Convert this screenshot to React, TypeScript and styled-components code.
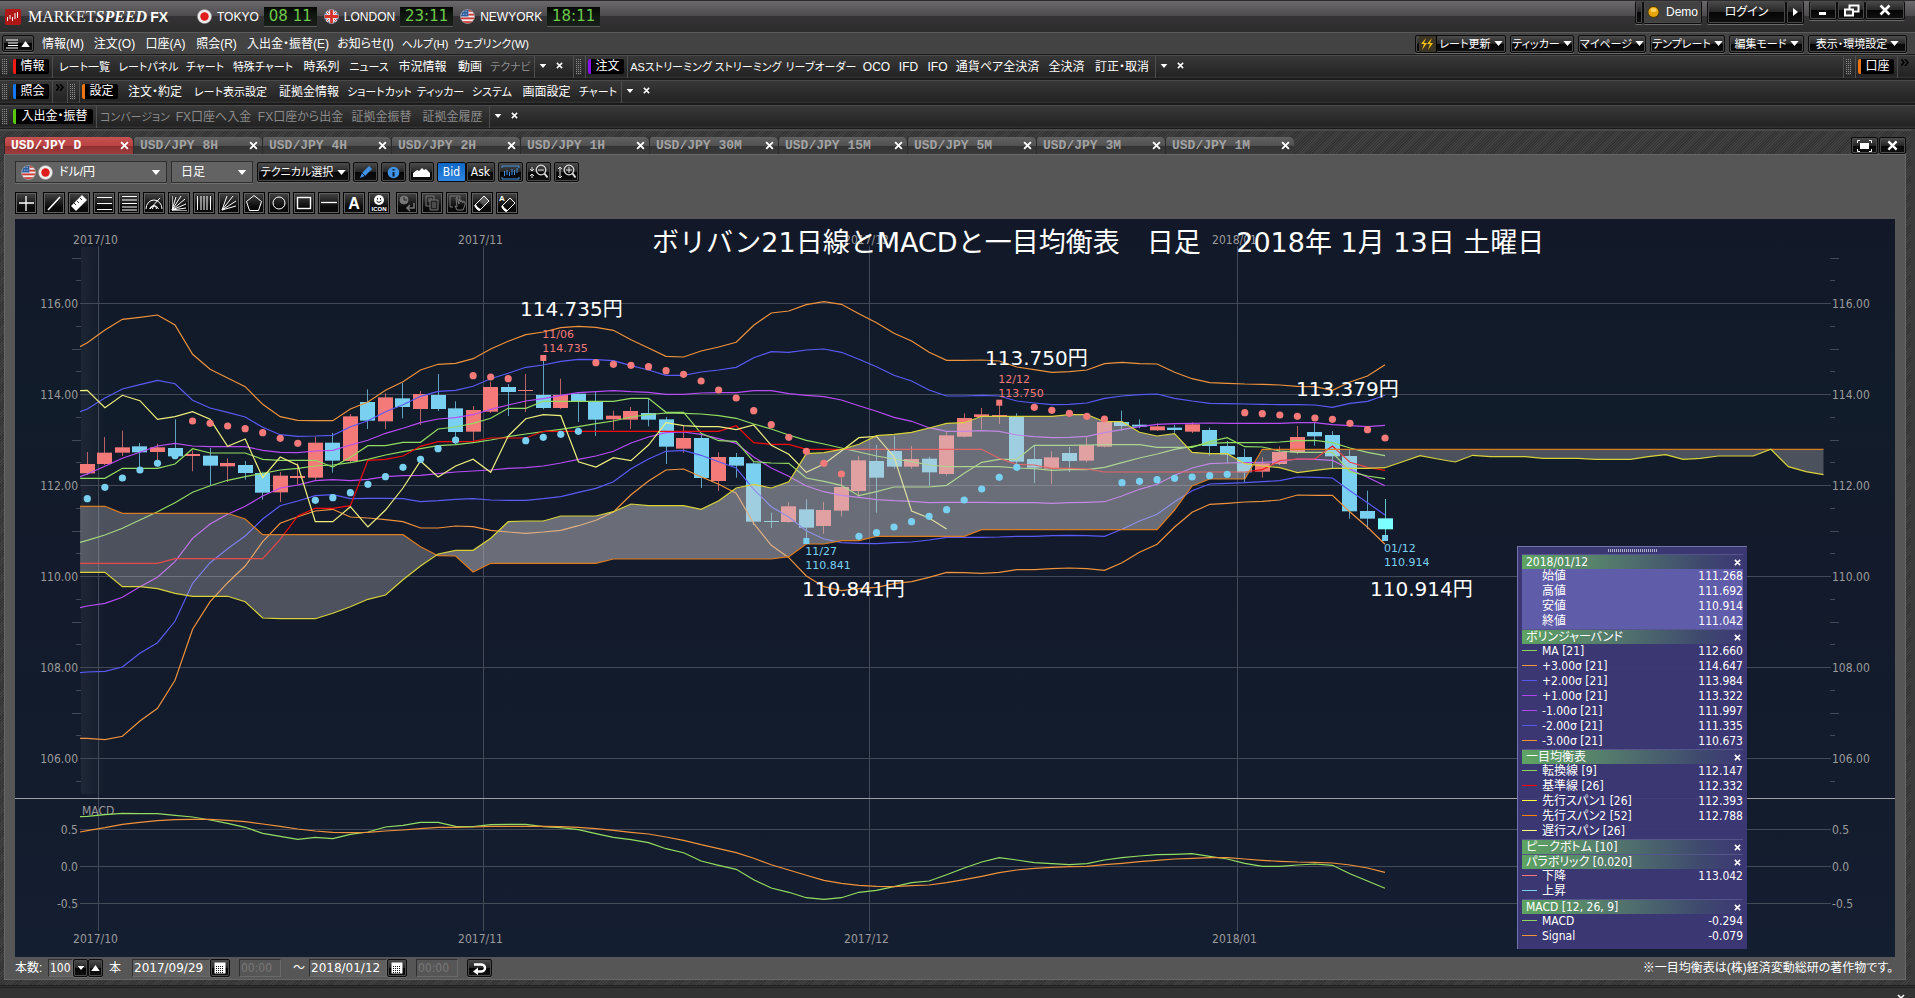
import React from 'react';
import styled, { createGlobalStyle, css } from 'styled-components';

const uiFont = '"Liberation Sans", "Noto Sans CJK JP", sans-serif';
const chartFont = '"DejaVu Sans Condensed", "Noto Sans CJK JP", sans-serif';
const wideFont = '"DejaVu Sans", "Noto Sans CJK JP", sans-serif';

const GlobalStyle = createGlobalStyle`
  * { box-sizing: border-box; }
  body {
    margin: 0;
    background: #333;
    color: #fff;
    font: 12px/16px ${uiFont};
    font-feature-settings: "palt";
  }
  button, input, select { font: inherit; font-feature-settings: inherit; color: inherit; margin: 0; }
`;

const hatch = css`
  background: repeating-linear-gradient(135deg, #414141 0 1px, #333 1px 2px);
`;
const blackButton = css`
  border: 1px solid #0c0c0c;
  border-radius: 2px;
  background: linear-gradient(#4c4c4c, #262626 50%, #050505 50%, #101010);
  box-shadow: inset 0 0 0 1px #4a4a4a, 0 1px 0 #6b6b6b;
`;

const Shell = styled.div`
  display: flex;
  flex-direction: column;
  min-height: 100vh;
  overflow: hidden;
`;

/* ---------- title bar ---------- */
const TitleBar = styled.header`
  display: flex;
  align-items: flex-start;
  justify-content: space-between;
  height: 32px;
  border-top: 1px solid #2c2a2c;
  background: linear-gradient(#6b696b, #4c4a4c 15px, #353335 15px, #2c2c2c);
`;
const Brand = styled.div`
  display: flex;
  align-items: center;
  height: 31px;
  padding-left: 5px;
`;
const BrandName = styled.h1`
  margin: 0 0 0 7px;
  width: 169px;
  font: 16px/20px "Liberation Serif", serif;
  white-space: nowrap;
  em { font-weight: bold; }
  strong { font: bold 14px/20px ${uiFont}; margin-left: 3px; }
`;
const City = styled.div`
  display: flex;
  align-items: center;
  gap: 5px;
  margin-right: 7px;
  font-size: 12px;
  white-space: nowrap;
`;
const Clock = styled.time`
  width: 53px;
  height: 20px;
  background: linear-gradient(#060806, #101810 50%, #1a1e1a);
  border-bottom: 1px solid #5a5a5a;
  color: #6fc94c;
  font: 15px/19px ${wideFont};
  text-align: center;
  white-space: pre;
`;
const WindowArea = styled.div`
  display: flex;
  padding-right: 10px;
`;
const TopButtons = styled.div<{ $gap: number; $h: number }>`
  display: flex;
  margin-left: ${p => p.$gap}px;
  height: ${p => p.$h}px;
`;
const TopButton = styled.button<{ $w: number; $lit?: boolean }>`
  ${blackButton}
  ${p => p.$lit && css`background: #414141;`}
  border-top: 0;
  display: flex;
  align-items: center;
  justify-content: center;
  gap: 6px;
  width: ${p => p.$w}px;
  padding: 0;
  white-space: nowrap;
`;

/* ---------- menu ---------- */
const MenuBar = styled.nav`
  display: flex;
  align-items: center;
  justify-content: space-between;
  height: 22px;
  padding: 0 8px 0 2px;
  border-top: 1px solid #5b5b5b;
  background: #434343;
`;
const MenuGroup = styled.div`
  display: flex;
  align-items: center;
`;
const MenuButton = styled.button`
  ${blackButton}
  display: flex;
  align-items: center;
  justify-content: center;
  gap: 3px;
  width: 32px;
  height: 17px;
  margin-right: 3px;
  padding: 0;
`;
const Slot = styled.a<{ $w: number; $dim?: boolean; $small?: boolean }>`
  flex: none;
  display: flex;
  justify-content: center;
  width: ${p => p.$w}px;
  font-size: ${p => (p.$small ? 11 : 12)}px;
  color: ${p => (p.$dim ? '#8c8c8c' : '#fff')};
  text-decoration: none;
  white-space: nowrap;
`;
const DropButton = styled.button<{ $w: number }>`
  ${blackButton}
  display: flex;
  align-items: center;
  justify-content: center;
  gap: 3px;
  width: ${p => p.$w}px;
  height: 18px;
  margin-left: 4px;
  padding: 0;
  font-size: 11px;
  white-space: nowrap;
`;
const Bolt = styled.span`
  display: flex;
  align-items: center;
  justify-content: center;
  width: 18px;
  height: 16px;
  border-right: 1px solid #000;
  background: #3c3424;
`;

/* ---------- tool bars ---------- */
const ToolRow = styled.div`
  display: flex;
  align-items: center;
  height: 25px;
  padding-right: 3px;
  border-top: 1px solid #1b1b1b;
  border-bottom: 1px solid #1b1b1b;
  background: linear-gradient(#4a4a4a 1px, #383838 1px, #232323 21px, #303030 22px);
`;
const ToolGroup = styled.div<{ $end?: boolean }>`
  display: flex;
  align-items: center;
  height: 100%;
  ${p => p.$end && css`margin-left: auto;`}
`;
const Grip = styled.i`
  width: 6px;
  height: 16px;
  margin: 0 3px 0 2px;
  background:
    repeating-linear-gradient(0deg, #333 0 1px, transparent 1px 2px),
    repeating-linear-gradient(90deg, #8a8a8a 0 1px, #333 1px 2px);
`;
const Tag = styled.span<{ $c: string; $w: number }>`
  flex: none;
  width: ${p => p.$w}px;
  height: 15px;
  margin: 0 3px 0 2px;
  border-left: 3px solid ${p => p.$c};
  border-radius: 2px;
  background: #000;
  line-height: 15px;
  text-align: center;
`;
const Divider = styled.i`
  width: 1px;
  height: 22px;
  background: #4e4e4e;
`;
const ToolItems = styled.div`
  display: flex;
  padding: 0 1px;
`;
const TinyButton = styled.button<{ $dark?: boolean }>`
  display: flex;
  align-items: center;
  justify-content: center;
  width: ${p => (p.$dark ? 14 : 16)}px;
  height: 20px;
  padding: 0;
  border: 0;
  background: none;
  color: ${p => (p.$dark ? '#000' : '#fff')};
  ${p => p.$dark && css`padding-bottom: 8px;`}
`;
const GroupTail = styled.div`
  display: flex;
  margin-right: 6px;
`;

/* ---------- tabs ---------- */
const Workspace = styled.main`
  ${hatch}
  border-top: 2px solid #4a4a4a;
  padding: 0 5px 5px 4px;
  border-right: 4px solid #3b3b3b;
`;
const TabStrip = styled.div`
  display: flex;
  align-items: flex-end;
  height: 23px;
`;
const Tab = styled.div<{ $active?: boolean }>`
  display: flex;
  align-items: center;
  justify-content: space-between;
  width: 129px;
  height: 17px;
  padding: 0 1px 0 6px;
  border-left: 1px solid #2a2a2a;
  border-radius: 3px 5px 0 0;
  background: ${p =>
    p.$active
      ? 'linear-gradient(#c65252, #b94242 9px, #8f2f2f 9px, #9c3c3c)'
      : 'linear-gradient(#616161, #505050 9px, #333 9px, #3a3a3a)'};
`;
const TabLabel = styled.button<{ $active?: boolean }>`
  padding: 0;
  border: 0;
  background: none;
  color: ${p => (p.$active ? '#fff' : '#a2a2a2')};
  font: bold 13px/17px "Liberation Mono", monospace;
`;
const PaneButton = styled.button`
  ${blackButton}
  display: flex;
  align-items: center;
  justify-content: center;
  width: 27px;
  height: 17px;
  margin-left: 1px;
  padding: 0;
`;
const Spacer = styled.div`
  flex: 1;
`;

const Pane = styled.section`
  border: 1px solid #676767;
  padding: 6px 10px 0;
  background: #565656;
`;
const ControlRow = styled.div`
  display: flex;
  align-items: center;
  gap: 3px;
  height: 22px;
`;
const Picker = styled.label<{ $w: number }>`
  display: flex;
  align-items: center;
  gap: 2px;
  width: ${p => p.$w}px;
  height: 22px;
  margin-right: 1px;
  padding: 0 5px;
  border: 1px solid #2f2f2f;
  box-shadow: 0 1px 0 #707070;
  background: #636363;
  select {
    flex: 1;
    min-width: 0;
    padding: 0 4px;
    border: 0;
    outline: 0;
    appearance: none;
    background: none;
  }
`;
const ToolButton = styled.button<{ $w?: number }>`
  ${blackButton}
  display: flex;
  align-items: center;
  justify-content: center;
  gap: 4px;
  width: ${p => p.$w || 25}px;
  height: 20px;
  padding: 0;
  font-size: 11px;
  white-space: nowrap;
`;
const Pair = styled.div`
  display: flex;
`;
const PriceSide = styled.button<{ $on?: boolean }>`
  ${blackButton}
  ${p => p.$on && css`background: linear-gradient(#0f66c4, #2f86e0); box-shadow: none;`}
  width: 29px;
  height: 20px;
  padding: 0;
  font: 12px/16px ${chartFont};
`;
const DrawRow = styled(ControlRow)`
  margin-top: 9px;
`;
const DrawButton = styled.button<{ $gap?: boolean }>`
  width: 22px;
  height: 22px;
  padding: 0;
  margin-right: ${p => (p.$gap ? 3 : 0)}px;
  border: 1px solid #050505;
  outline: 1px solid #5f5f5f;
  outline-offset: -2px;
  background: linear-gradient(#454545, #0a0a0a 70%);
  svg { display: block; }
`;

/* ---------- chart ---------- */
const ChartBox = styled.div`
  position: relative;
  margin-top: 5px;
  background: linear-gradient(#121828, #111c2a 25%, #131a2b 45%, #121c2c 75%, #141e31);
  font-feature-settings: normal;
  > svg { display: block; width: 100%; height: auto; }
`;
const Legend = styled.aside`
  position: absolute;
  right: 148px;
  bottom: 8px;
  width: 230px;
  padding: 3px 4px 5px;
  border-left: 1px solid #7474ad;
  border-top: 1px solid #7474ad;
  background: rgba(61, 57, 118, 0.95);
  font: 12px/15px ${chartFont};
  font-feature-settings: "palt";
`;
const LegendGrip = styled.div`
  width: 50px;
  height: 3px;
  margin: -1px auto 2px;
  background: repeating-linear-gradient(90deg, #b0b0cc 0 1px, transparent 1px 2px);
`;
const LegendHead = styled.div`
  display: flex;
  align-items: center;
  justify-content: space-between;
  height: 15px;
  padding: 0 1px 0 4px;
  border-top: 1px solid #55558c;
  background: linear-gradient(90deg, #5ea462, #567f6c 35%, #3f4a6e 80%, #3c3874);
  line-height: 14px;
  button { height: 12px; width: 8px; padding: 0; border: 0; background: none; display: flex; align-items: center; }
`;
const LegendTable = styled.table<{ $lit?: boolean }>`
  width: 100%;
  border-collapse: collapse;
  background: ${p => (p.$lit ? '#5f5ca9' : 'transparent')};
  tr { height: 15px; }
  th, td { padding: 0; font-weight: normal; line-height: 15px; height: 15px; }
  th { text-align: left; }
  td { text-align: right; }
`;
const Swatch = styled.i<{ $c?: string }>`
  display: inline-block;
  width: 15px;
  height: 1px;
  margin-right: 5px;
  vertical-align: 4px;
  background: ${p => p.$c || 'transparent'};
`;

/* ---------- bottom ---------- */
const BottomRow = styled.div`
  display: flex;
  align-items: center;
  height: 22px;
`;
const Field = styled.input<{ $w: number; $off?: boolean }>`
  width: ${p => p.$w}px;
  height: 18px;
  padding: 0 1px;
  border: 1px solid #333;
  border-color: #303030 #6a6a6a #6a6a6a #303030;
  background: ${p => (p.$off ? '#565656' : '#606060')};
  color: ${p => (p.$off ? '#787878' : '#fff')};
  font: 12px/16px ${p => (p.$w > 60 ? wideFont : chartFont)};
`;
const SmallButton = styled.button<{ $w: number; $gap?: number }>`
  ${blackButton}
  display: flex;
  align-items: center;
  justify-content: center;
  width: ${p => p.$w}px;
  height: 18px;
  padding: 0;
  margin-right: ${p => p.$gap || 0}px;
`;
const Caption = styled.label<{ $w: number }>`
  width: ${p => p.$w}px;
  white-space: nowrap;
`;
const Note = styled.p`
  margin: 0 2px 0 auto;
`;
const Footer = styled.footer`
  display: flex;
  flex: 1;
  justify-content: flex-end;
  padding-right: 6px;
  border-top: 3px double #1f1f1f;
  background: #333;
  overflow: hidden;
  height: 13px;
`;

/* ---------- icons ---------- */
const Down = ({ s = 9 }: { s?: number }) => (
  <svg width={s} height={s > 8 ? 5 : 4} viewBox="0 0 10 6"><path d="M0 0h10L5 6z" fill="#fff" /></svg>
);
const Up = () => <svg width="9" height="6" viewBox="0 0 10 7"><path d="M0 7h10L5 0z" fill="#fff" /></svg>;
const Cross = ({ s = 7 }: { s?: number }) => (
  <svg width={s} height={s} viewBox="0 0 8 8"><path d="M1 1l6 6M7 1l-6 6" stroke="#fff" strokeWidth="1.7" /></svg>
);
const More = () => (
  <svg width="8" height="7" viewBox="0 0 8 7"><path d="M0 0l3 3.500-3 3.500M4 0l3 3.500-3 3.500" fill="none" stroke="currentColor" strokeWidth="1.6" /></svg>
);
const Flag = ({ kind }: { kind: 'jp' | 'uk' | 'us' }) => (
  <svg width="15" height="15" viewBox="0 0 16 16">
    <clipPath id={'c' + kind}><circle cx="8" cy="8" r="7.500" /></clipPath>
    <g clipPath={`url(#c${kind})`}>
      {kind === 'jp' && <><rect width="16" height="16" fill="#eee" /><circle cx="8" cy="8" r="4.500" fill="#e01c1c" /></>}
      {kind === 'us' && <>
        <rect width="16" height="16" fill="#eee" />
        {[1, 5, 9, 13].map(y => <rect key={y} y={y} width="16" height="2" fill="#cf3a35" />)}
        <rect width="9" height="8" fill="#2f5f9e" />
        <path d="M1 2.500h8M1 5.500h8" stroke="#cfe0f2" strokeDasharray="1 1.500" />
      </>}
      {kind === 'uk' && <>
        <rect width="16" height="16" fill="#26579b" />
        <path d="M0 0l16 16M16 0L0 16" stroke="#eee" strokeWidth="3" />
        <path d="M0 0l16 16M16 0L0 16" stroke="#d6302b" />
        <path d="M8 0v16M0 8h16" stroke="#eee" strokeWidth="5" />
        <path d="M8 0v16M0 8h16" stroke="#d6302b" strokeWidth="3" />
      </>}
    </g>
    <circle cx="8" cy="8" r="7.500" fill="none" stroke="#999" strokeWidth=".6" />
  </svg>
);

const fan = 'M4 18L8 5M4 18L13 4M4 18L17 7M4 18L18 12M4 18L18 16';
const drawTools: [string, React.ReactNode, boolean?][] = [
  ['十字', <path d="M11 4v15M4 11h15" strokeWidth="1.300" />, true],
  ['直線', <path d="M5 18L17 5" strokeWidth="1.600" />],
  ['定規', <><path d="M3 14L14 3l5 5L8 19z" fill="#fff" stroke="none" /><path d="M6 11l2 2M9 9l2 2M12 6l2 2" stroke="#333" /></>],
  ['三本線', <path d="M4 5.500h15M4 11.500h15M4 17.500h15" />],
  ['多本線', <path d="M4 4.500h15M4 8h15M4 11.500h15M4 15h15M4 18h15" />],
  ['円弧', <><path d="M3 17a8 9 0 0 1 16 0M6.500 17a5 6 0 0 1 9 0M9.500 17a2 3 0 0 1 4 0M7 17l10-11" /></>],
  ['扇形', <><path d="M4.500 4v14.500H19" strokeOpacity=".6" /><path d={fan} /></>],
  ['時間帯', <path d="M4.500 4v14M8 4v14M11 4v14M14 4v14M17.500 4v14" />],
  ['放射線', <path d="M4 18L9 4M4 18L15 4M4 18L18 9M4 18L18 14" />],
  ['五角形', <path d="M11 3.500l7.500 6-3 9h-9l-3-9z" />],
  ['円', <circle cx="11" cy="11" r="6" />],
  ['四角', <rect x="4.500" y="5.500" width="13" height="11" strokeWidth="1.400" />],
  ['水平線', <path d="M3 10.500h16" strokeWidth="1.300" />],
  ['文字', <text x="11" y="17" textAnchor="middle" fill="#fff" stroke="none" fontWeight="bold" fontSize="16">A</text>],
  ['アイコン', <>
    <circle cx="11" cy="8" r="5" fill="#fff" stroke="none" />
    <path d="M9.500 6v1.500M12.500 6v1.500M8.500 9q2.500 3 5 0" stroke="#111" />
    <text x="11" y="19" textAnchor="middle" fill="#fff" stroke="none" fontWeight="bold" fontSize="6">ICON</text>
  </>, true],
  ['履歴', <g stroke="#777"><circle cx="8" cy="8" r="4" fill="#777" /><path d="M8 5v3h3" stroke="#222" /><path d="M18 11v5h-6M14 13l-3 3 3 3" strokeWidth="1.600" /></g>],
  ['複製', <g stroke="#777"><path d="M5 4h8v10H5zM7 7h4M7 9h2" /><path d="M9 8h8v10H9z" fill="#222" /><path d="M11 11h4M11 13h4M11 15h4" /></g>],
  ['手', <g stroke="#777"><path d="M4 4h10v4M4 4v11h3" /><path d="M9 14l2 4h6l2-5v-3l-2-1v2l-2-3v2l-2-3v5l-2-7-1 1 1 9z" /></g>],
  ['消しゴム', <><path d="M4 13l9-9 5 5-9 9h-2z" /><path d="M13 4l5 5-5 5-5-5z" fill="#fff" fillOpacity=".25" stroke="none" /><path d="M4 13q2 4 5 5" strokeWidth="2" /></>],
  ['全消去', <><path d="M6 14l8-8 5 5-8 8h-2z" /><path d="M6 14q2 4 5 5" strokeWidth="2" /><text x="3" y="9" fill="#fff" stroke="none" fontSize="8" fontWeight="bold">A</text></>],
];

const CalendarIcon = () => (
  <svg width="12" height="12" viewBox="0 0 12 12">
    <rect x=".5" y=".5" width="11" height="11" fill="#fff" />
    <path d="M2 4.500h8M2 6.500h8M2 8.500h8M2 10.500h8" stroke="#111" strokeDasharray="1 1" />
  </svg>
);

/* ---------- chart data ---------- */
// Levels are held in thirds of a pixel; STEP is the distance between two sessions.
const STEP = 52.61;
const px = (i: number) => (217 + STEP * i) / 3;
const py = (v: number) => (v - 27) / 3;
const my = (v: number) => (v + 1683) / 3;
const run = (v: number, n: number): number[] => Array(n).fill(v);

type Candle = ['R' | 'B' | 'C', number, number, number, number];
const candles: Candle[] = [
  ['R', 726, 762, 790, 795], ['R', 681, 728, 762, 765], ['R', 662, 712, 728, 738], ['B', 699, 709, 727, 780],
  ['R', 701, 712, 726, 755], ['B', 628, 714, 739, 745], ['R', 722, 732, 738, 784], ['B', 714, 737, 767, 826],
  ['R', 745, 759, 769, 816], ['B', 753, 765, 789, 809], ['B', 785, 789, 848, 869], ['R', 786, 797, 847, 876],
  ['R', 760, 798, 804, 824], ['R', 681, 698, 803, 809], ['B', 669, 698, 752, 788], ['R', 612, 619, 753, 757],
  ['B', 538, 576, 632, 657], ['R', 550, 562, 634, 657], ['B', 519, 565, 591, 625], ['R', 543, 552, 597, 645],
  ['B', 492, 555, 597, 603], ['B', 574, 595, 666, 704], ['R', 588, 600, 665, 692], ['R', 515, 531, 605, 609],
  ['B', 522, 531, 546, 618], ['R', 492, 540, 543, 606], ['B', 443, 555, 594, 598], ['R', 506, 555, 594, 597],
  ['B', 551, 551, 574, 636], ['B', 544, 574, 629, 678], ['R', 602, 617, 628, 660], ['R', 591, 603, 629, 657],
  ['B', 565, 609, 629, 649], ['B', 621, 628, 710, 762], ['R', 647, 684, 716, 728], ['B', 671, 684, 804, 834],
  ['R', 727, 741, 813, 843], ['B', 729, 741, 767, 803], ['B', 757, 760, 935, 945], ['B', 908, 933, 936, 954],
  ['R', 877, 889, 936, 938], ['B', 868, 898, 953, 990], ['R', 876, 900, 948, 971], ['R', 803, 831, 902, 919],
  ['R', 738, 751, 843, 860], ['B', 705, 753, 803, 908], ['B', 678, 723, 770, 776], ['R', 708, 747, 770, 776],
  ['B', 740, 746, 787, 827], ['R', 665, 676, 792, 797], ['R', 610, 624, 680, 682], ['R', 594, 613, 621, 658],
  ['R', 578, 615, 619, 642], ['B', 610, 621, 755, 782], ['B', 706, 747, 773, 819], ['R', 724, 742, 776, 822],
  ['B', 711, 729, 753, 786], ['R', 679, 705, 752, 757], ['R', 620, 636, 710, 712], ['B', 602, 636, 648, 662],
  ['B', 628, 644, 650, 655], ['R', 640, 649, 661, 663], ['B', 644, 653, 660, 668], ['R', 637, 643, 665, 669],
  ['B', 653, 660, 708, 737], ['B', 693, 708, 734, 760], ['B', 716, 741, 787, 817], ['R', 742, 760, 785, 803],
  ['R', 709, 726, 762, 765], ['R', 648, 681, 727, 732], ['B', 638, 666, 679, 707], ['B', 663, 675, 739, 777],
  ['B', 720, 738, 904, 926], ['B', 842, 903, 926, 957], ['C', 867, 925, 958, 990],
];

// The first value of every series is the level at the plot's left edge.
const up3 = [410, 398, 360, 328, 322, 315, 345, 433, 478, 504, 530, 583, 620, 631, 632, 632, 597, 576, 541, 515, 480, 463, 460, 446, 417, 394, 374, 366, 353, 349, 352, 361, 389, 414, 439, 441, 423, 411, 397, 346, 309, 303, 284, 275, 283, 311, 338, 370, 393, 427, 451, 451, 450, 453, 471, 479, 487, 485, 480, 461, 457, 461, 462, 487, 506, 518, 520, 522, 523, 525, 529, 530, 541, 516, 498, 464];
const up2 = [605, 597, 564, 537, 524, 511, 521, 571, 594, 607, 621, 652, 674, 679, 678, 676, 650, 632, 605, 584, 559, 544, 541, 529, 506, 490, 472, 465, 454, 448, 449, 452, 467, 480, 496, 496, 486, 480, 472, 443, 425, 427, 420, 417, 427, 448, 470, 496, 513, 540, 558, 558, 556, 558, 573, 579, 584, 583, 579, 565, 558, 554, 552, 565, 573, 580, 581, 582, 583, 584, 584, 585, 592, 580, 574, 556];
const up1 = [800, 792, 769, 745, 727, 708, 700, 708, 710, 710, 710, 721, 727, 728, 723, 721, 705, 691, 670, 655, 638, 627, 623, 614, 598, 585, 573, 566, 556, 548, 545, 542, 545, 547, 553, 553, 549, 548, 548, 542, 542, 551, 556, 560, 570, 587, 604, 622, 634, 653, 664, 664, 662, 664, 675, 680, 683, 682, 679, 668, 659, 650, 643, 641, 640, 639, 640, 640, 640, 640, 638, 638, 644, 647, 650, 646];
const ma = [997, 991, 975, 955, 930, 905, 878, 847, 827, 811, 800, 790, 780, 775, 768, 765, 758, 748, 735, 725, 716, 707, 704, 698, 690, 680, 672, 665, 658, 650, 641, 633, 621, 614, 609, 610, 612, 617, 625, 642, 657, 675, 691, 702, 714, 726, 738, 747, 755, 765, 770, 770, 770, 770, 774, 776, 781, 779, 779, 772, 758, 744, 732, 718, 709, 700, 698, 698, 698, 696, 692, 691, 698, 714, 727, 737];
const dn1 = [1193, 1188, 1180, 1162, 1130, 1102, 1055, 985, 942, 913, 889, 858, 834, 825, 812, 809, 812, 808, 800, 797, 796, 791, 786, 783, 780, 775, 773, 768, 759, 748, 738, 724, 699, 681, 668, 666, 673, 686, 700, 741, 774, 799, 828, 845, 856, 862, 869, 872, 874, 878, 877, 877, 877, 878, 878, 878, 880, 878, 877, 875, 858, 838, 823, 796, 774, 761, 759, 758, 757, 755, 747, 748, 751, 778, 802, 827];
const dn2 = [1388, 1386, 1384, 1371, 1330, 1298, 1234, 1120, 1058, 1016, 978, 927, 887, 873, 857, 854, 866, 865, 865, 866, 875, 872, 868, 866, 870, 871, 871, 866, 860, 847, 835, 815, 776, 747, 724, 721, 736, 755, 774, 838, 890, 921, 962, 987, 998, 1000, 1001, 998, 996, 990, 982, 982, 982, 981, 979, 979, 977, 976, 977, 979, 958, 933, 913, 875, 842, 822, 820, 818, 815, 812, 801, 802, 804, 842, 878, 915];
const dn3 = [1585, 1585, 1589, 1579, 1533, 1495, 1411, 1258, 1175, 1118, 1068, 995, 940, 920, 903, 898, 921, 924, 929, 935, 954, 954, 948, 950, 961, 966, 970, 966, 961, 947, 931, 906, 854, 813, 780, 777, 800, 823, 850, 940, 1006, 1043, 1098, 1130, 1142, 1136, 1132, 1121, 1115, 1102, 1087, 1088, 1090, 1087, 1079, 1079, 1076, 1074, 1076, 1081, 1058, 1027, 1003, 951, 907, 883, 880, 876, 874, 870, 855, 856, 856, 906, 952, 1003];
const tenkan = [805, 805, 805, 775, 775, 775, 762, 716, 729, 729, 729, 748, 751, 751, 751, 771, 742, 707, 707, 697, 697, 657, 651, 640, 625, 595, 595, 574, 574, 574, 574, 574, 565, 565, 607, 607, 670, 692, 694, 755, 759, 760, 804, 814, 826, 857, 845, 831, 831, 831, 826, 790, 757, 748, 748, 706, 706, 706, 705, 704, 704, 704, 712, 712, 712, 695, 683, 710, 711, 723, 727, 727, 727, 785, 798, 806];
const kijun = [...run(1060, 6), ...run(1046, 6), 988, 918, 895, 895, 887, 751, 748, 738, 709, 695, 695, 694, 684, 684, 684, ...run(664, 11), 647, 698, 703, 703, ...run(718, 11), 745, 763, 765, 775, 775, 777, ...run(786, 9), 779, 752, 747, 747, 708, 757, 772, 781];
const chikou = [542, 541, 593, 556, 572, 628, 620, 605, 628, 709, 687, 803, 741, 766, 935, 935, 890, 951, 900, 834, 753, 801, 768, 748, 787, 678, 626, 614, 617, 755, 771, 743, 752, 705, 638, 647, 650, 650, 659, 645, 706, 733, 787, 762, 723, 683, 679, 740, 903, 924, 957];
const span1 = [1087, 1087, 1087, 1130, 1130, 1136, 1150, 1159, 1159, 1159, 1175, 1224, 1226, 1226, 1226, 1210, 1190, 1168, 1155, 1109, 1068, 1032, 1021, 1021, 985, 935, 933, 933, 918, 918, 918, 905, 882, 887, 887, 887, 898, 872, 834, 823, 834, 815, 731, 728, 718, 703, 677, 673, 667, 654, 640, 638, 619, 619, 619, 619, 619, 614, 614, 635, 635, 667, 678, 671, 727, 731, 731, 761, 768, 773, 788, 781, 775, 775, 775, 773, 755, 737, 747, 756, 736, 740, 740, 740, 745, 745, 745, 748, 748, 748, 740, 734, 748, 745, 738, 738, 738, 718, 770, 785, 794];
const span2 = [889, 889, 889, ...run(910, 7), 927, ...run(974, 9), 1010, 1037, 1038, 1086, ...run(1060, 7), ...run(1047, 10), 1040, 1002, 1002, 992, 992, ...run(979, 6), ...run(959, 11), 900, 828, 807, 807, 807, ...run(718, 33)];
const macd = [110, 109, 104, 100, 101, 101, 106, 111, 120, 130, 142, 160, 169, 178, 172, 176, 163, 156, 141, 136, 127, 127, 139, 140, 134, 133, 133, 140, 143, 149, 161, 172, 179, 188, 206, 218, 243, 256, 268, 299, 324, 337, 353, 358, 353, 337, 331, 320, 308, 303, 284, 264, 246, 233, 240, 248, 251, 254, 251, 240, 233, 228, 224, 223, 221, 229, 237, 250, 259, 259, 255, 252, 256, 281, 303, 325];
const signal = [156, 152, 143, 133, 127, 122, 119, 118, 118, 121, 125, 132, 139, 147, 153, 157, 158, 157, 153, 150, 146, 142, 142, 141, 139, 139, 139, 139, 140, 142, 146, 151, 157, 162, 171, 181, 194, 206, 218, 235, 254, 270, 286, 301, 310, 316, 319, 320, 317, 315, 308, 299, 289, 278, 270, 265, 262, 260, 259, 254, 250, 245, 241, 237, 235, 233, 233, 237, 241, 244, 246, 247, 249, 255, 264, 277];

const sar: { c: string; from: number; v: number[] }[] = [
  { c: '#7ad0f0', from: 0, v: [866, 832, 804, 780, 760, 737] },
  { c: '#f47a7a', from: 6, v: [633, 640, 648, 656, 668, 685, 700] },
  { c: '#7ad0f0', from: 13, v: [871, 863, 848, 823, 800, 772, 748, 716, 690] },
  { c: '#f47a7a', from: 22, v: [497, 501, 506] },
  { c: '#7ad0f0', from: 25, v: [692, 682, 673, 664] },
  { c: '#f47a7a', from: 29, v: [458, 463, 466, 470, 482, 493, 513, 540, 564, 602, 644, 682, 724, 760, 792] },
  { c: '#7ad0f0', from: 44, v: [979, 968, 951, 935, 919, 899, 870, 837, 802, 772] },
  { c: '#f47a7a', from: 54, v: [592, 601, 610, 619, 627] },
  { c: '#7ad0f0', from: 59, v: [818, 814, 809, 805, 801, 797, 793] },
  { c: '#f47a7a', from: 66, v: [608, 611, 615, 619, 624, 628, 640, 659, 684] },
];
const peaks: { i: number; v: number; c: string; day: string; rate: string; y: number }[] = [
  { i: 26, v: 444, c: '#f47a7a', day: '11/06', rate: '114.735', y: 119 },
  { i: 52, v: 578, c: '#f47a7a', day: '12/12', rate: '113.750', y: 164 },
  { i: 41, v: 993, c: '#7ad0f0', day: '11/27', rate: '110.841', y: 336 },
  { i: 74, v: 984, c: '#7ad0f0', day: '01/12', rate: '110.914', y: 333 },
];
const notes: [number, number, string][] = [
  [505, 97, '114.735円'], [970, 146, '113.750円'], [1281, 177, '113.379円'], [787, 377, '110.841円'], [1355, 377, '110.914円'],
];
const months: [number, string][] = [[83.5, '2017/10'], [468.5, '2017/11'], [854.5, '2017/12'], [1222.5, '2018/01']];

const seriesX = (k: number) => (k === 0 ? 65 : px(k - 1));
const points = (v: number[], y: (n: number) => number) => v.map((n, k) => `${seriesX(k).toFixed(1)},${y(n).toFixed(1)}`).join(' ');

// The cloud is split where the two leading spans cross.
const cloud = (() => {
  const out: { d: string; bull: boolean }[] = [];
  let top: string[] = [];
  let bottom: string[] = [];
  let bull = span1[0] < span2[0];
  const flush = () => { out.push({ d: [...top, ...bottom.reverse()].join(' '), bull }); top = []; bottom = []; };
  for (let k = 0; k < span2.length; k++) {
    const d = span1[k] - span2[k];
    if (k > 0) {
      const p = span1[k - 1] - span2[k - 1];
      if (p * d < 0) {
        const t = p / (p - d);
        const at = `${seriesX(k - 1) + t * (seriesX(k) - seriesX(k - 1))},${py(span1[k - 1] + t * (span1[k] - span1[k - 1]))}`;
        top.push(at); bottom.push(at);
        flush();
        bull = d < 0;
        top.push(at); bottom.push(at);
      }
    }
    top.push(`${seriesX(k)},${py(span1[k])}`);
    bottom.push(`${seriesX(k)},${py(span2[k])}`);
  }
  flush();
  return out;
})();

const fills = { R: '#f47a7a', B: '#7ad0f0', C: '#7cffff' };
const Line = ({ v, c, y = py }: { v: number[]; c: string; y?: (n: number) => number }) => (
  <polyline points={points(v, y)} fill="none" stroke={c} strokeWidth="1.2" />
);

const Chart = () => {
  const priceY = (p: number) => Math.round(84 + (116 - p) * 45.5) + 0.5;
  const ticks = Array.from({ length: 24 }, (_, k) => 117 - k * 0.5);
  return (
    <svg viewBox="0 0 1880 738" role="img" aria-label="USD/JPY">
      <defs>
        <linearGradient id="edge"><stop offset="0" stopColor="#fff" stopOpacity=".05" /><stop offset="1" stopColor="#fff" stopOpacity="0" /></linearGradient>
      </defs>
      <rect x="66" y="28" width="24" height="547" fill="url(#edge)" />
      <g stroke="#434957" fill="none">
        {ticks.map(p => {
          const y = priceY(p);
          if (p % 2 === 0) return <path key={p} d={`M65 ${y}H1816`} />;
          const n = p % 1 === 0 ? 9 : 5;
          return <path key={p} d={`M${66 - n} ${y}h${n}M1815 ${y}h${n}`} />;
        })}
        {[610.5, 647.5, 684.5].map(y => <path key={y} d={`M65 ${y}H1816`} />)}
        {months.map(([x]) => <path key={x} d={`M${x} 27V712`} />)}
      </g>
      <path d="M0 579.500H1880" stroke="#a0a0a4" />

      <g fontFamily={chartFont} fontSize="12" fill="#9b9b9b">
        {ticks.filter(p => p % 2 === 0).map(p => (
          <g key={p}>
            <text x="63" y={priceY(p) + 4} textAnchor="end">{p.toFixed(2)}</text>
            <text x="1817" y={priceY(p) + 4}>{p.toFixed(2)}</text>
          </g>
        ))}
        {[['0.5', 615], ['0.0', 652], ['-0.5', 689]].map(([t, y]) => (
          <g key={t}>
            <text x="63" y={y} textAnchor="end">{t}</text>
            <text x="1817" y={y}>{t}</text>
          </g>
        ))}
        {months.map(([x, t]) => (
          <g key={t} textAnchor="middle">
            <text x={x - 3} y="25">{t}</text>
            <text x={x - 3} y="724">{t}</text>
          </g>
        ))}
        <text x="67" y="596">MACD</text>
      </g>

      <clipPath id="plot"><rect x="65" y="0" width="1751" height="738" /></clipPath>
      <g clipPath="url(#plot)">
        {candles.map(([k, h, t, b, l], i) => (
          <g key={i} fill={fills[k]}>
            <rect x={Math.round(px(i) - 0.5)} y={py(h)} width="1" height={(l - h) / 3} opacity=".75" />
            <rect x={Math.round(px(i) - 7.5)} y={py(t)} width="15" height={Math.max((b - t) / 3, 1)} />
          </g>
        ))}
        <Line v={up3} c="#ee923c" />
        <Line v={dn3} c="#ee923c" />
        <Line v={up2} c="#5a5af6" />
        <Line v={dn2} c="#5a5af6" />
        <Line v={up1} c="#b84cf6" />
        <Line v={dn1} c="#b84cf6" />
        <Line v={ma} c="#94dc60" />
        <Line v={tenkan} c="#94dc60" />
        <Line v={kijun} c="#f20c0c" />
        <Line v={chikou} c="#f0f07c" />
        {cloud.map((c, k) => <polygon key={k} points={c.d} fill={c.bull ? 'rgba(205,205,208,.47)' : 'rgba(205,205,205,.31)'} />)}
        <Line v={span2} c="#dc7c20" />
        <Line v={span1} c="#d8d23a" />
        {sar.map(s => s.v.map((v, k) => <circle key={s.from + '-' + k} cx={px(s.from + k)} cy={py(v)} r="3.6" fill={s.c} />))}
        <Line v={macd} c="#94dc60" y={my} />
        <Line v={signal} c="#f0923a" y={my} />
      </g>

      {peaks.map(p => (
        <g key={p.day} fill={p.c} fontFamily={wideFont} fontSize="11">
          <rect x={px(p.i) - 3} y={py(p.v) - 3} width="6" height="6" />
          <text x={px(p.i) - 1} y={p.y}>{p.day}</text>
          <text x={px(p.i) - 1} y={p.y + 14}>{p.rate}</text>
        </g>
      ))}
      <g fill="#fff" fontFamily={wideFont} fontSize="20">
        {notes.map(([x, y, t]) => <text key={t} x={x} y={y}>{t}</text>)}
        <text x="637" y="33" fontSize="27" xmlSpace="preserve">ボリバン21日線とMACDと一目均衡表　日足　 2018年 1月 13日 土曜日</text>
      </g>
    </svg>
  );
};

/* ---------- legend ---------- */
type Row = [string, string, string?];
const legend: { title: string; lit?: boolean; rows: Row[] }[] = [
  { title: '2018/01/12', lit: true, rows: [['始値', '111.268'], ['高値', '111.692'], ['安値', '110.914'], ['終値', '111.042']] },
  { title: 'ボリンジャーバンド', rows: [
    ['MA [21]', '112.660', '#8ed45c'], ['+3.00σ [21]', '114.647', '#f0923a'], ['+2.00σ [21]', '113.984', '#5858ee'],
    ['+1.00σ [21]', '113.322', '#b048ee'], ['-1.00σ [21]', '111.997', '#b048ee'], ['-2.00σ [21]', '111.335', '#5858ee'],
    ['-3.00σ [21]', '110.673', '#f0923a']] },
  { title: '一目均衡表', rows: [
    ['転換線 [9]', '112.147', '#8ed45c'], ['基準線 [26]', '112.332', '#ff0000'], ['先行スパン1 [26]', '112.393', '#ffff3c'],
    ['先行スパン2 [52]', '112.788', '#ff8000'], ['遅行スパン [26]', '', '#ffff80']] },
  { title: 'ピークボトム [10]', rows: [] },
  { title: 'パラボリック [0.020]', rows: [['下降', '113.042', '#f47a7a'], ['上昇', '', '#7ad0f0']] },
  { title: 'MACD [12, 26, 9]', rows: [['MACD', '-0.294', '#8ed45c'], ['Signal', '-0.079', '#f0923a']] },
];

/* ---------- tool bar data: label, slot width ---------- */
type Item = [string, number];
const menu: Item[] = [['情報(M)', 52], ['注文(O)', 51], ['口座(A)', 51], ['照会(R)', 51], ['入出金・振替(E)', 92], ['お知らせ(I)', 63], ['ヘルプ(H)', 56], ['ウェブリンク(W)', 77]];
const infoItems: Item[] = [['レート一覧', 61], ['レートパネル', 67], ['チャート', 46], ['特殊チャート', 70], ['時系列', 47], ['ニュース', 48], ['市況情報', 59], ['動画', 36], ['テクナビ', 45]];
const orderItems: Item[] = [['ASストリーミング', 84], ['ストリーミング', 70], ['リーブオーダー', 76], ['OCO', 35], ['IFD', 29], ['IFO', 29], ['通貨ペア全決済', 91], ['全決済', 47], ['訂正・取消', 64]];
const setItems: Item[] = [['注文・約定', 66], ['レート表示設定', 85], ['証拠金情報', 72], ['ショートカット', 69], ['ティッカー', 53], ['システム', 50], ['画面設定', 59], ['チャート', 44]];
const cashItems: Item[] = [['コンバージョン', 74], ['FX口座へ入金', 83], ['FX口座から出金', 91], ['証拠金振替', 71], ['証拠金履歴', 71]];
const isKana = (t: string) => (t.match(/[ァ-ヶー]/g) || []).length > 2;

const Items = ({ list, dim }: { list: Item[]; dim?: boolean }) => (
  <ToolItems>
    {list.map(([t, w]) => <Slot key={t} href="#" $w={w} $small={isKana(t)} $dim={dim || t === 'テクナビ'}>{t}</Slot>)}
  </ToolItems>
);
const GroupEnd = () => (
  <GroupTail>
    <Divider />
    <TinyButton aria-label="一覧"><Down s={8} /></TinyButton>
    <TinyButton aria-label="閉じる"><Cross s={7} /></TinyButton>
  </GroupTail>
);

const tabs = ['D', '8H', '4H', '2H', '1H', '30M', '15M', '5M', '3M', '1M'];

export default function App() {
  return (
    <Shell>
      <GlobalStyle />
      <TitleBar>
        <Brand>
          <svg width="16" height="16" viewBox="0 0 16 16">
            <rect width="16" height="16" rx="2" fill="#b01818" />
            <path d="M2.500 8v4M5 6v4M7.500 8v4M10 4v6M12.500 3v6" stroke="#fff" />
          </svg>
          <BrandName>MARKET<em>SPEED</em><strong>FX</strong></BrandName>
          <City><Flag kind="jp" />TOKYO<Clock>08 11</Clock></City>
          <City><Flag kind="uk" />LONDON<Clock>23:11</Clock></City>
          <City><Flag kind="us" />NEWYORK<Clock>18:11</Clock></City>
        </Brand>
        <WindowArea>
          <TopButtons $gap={0} $h={23}>
            <TopButton $w={8} aria-label="戻る" />
            <TopButton $w={59} $lit>
              <svg width="13" height="14"><circle cx="6.500" cy="7" r="6" fill="#4d3a00" /><circle cx="6.500" cy="7" r="5" fill="#e8a50c" /><ellipse cx="6.500" cy="5" rx="3" ry="2" fill="#fbd35c" /></svg>
              Demo
            </TopButton>
          </TopButtons>
          <TopButtons $gap={5} $h={23}>
            <TopButton $w={79}>ログイン</TopButton>
            <TopButton $w={18} aria-label="開く"><svg width="5" height="8"><path d="M0 0l5 4-5 4z" fill="#fff" /></svg></TopButton>
          </TopButtons>
          <TopButtons $gap={5} $h={19}>
            <TopButton $w={28} aria-label="最小化"><svg width="12" height="12"><path d="M2 9.500h7" stroke="#fff" strokeWidth="3" /></svg></TopButton>
            <TopButton $w={28} aria-label="元に戻す"><svg width="17" height="13"><path d="M6.500 1.500h9v6h-9z" fill="none" stroke="#fff" strokeWidth="2" /><path d="M2 5.500h8v6H2z" fill="#333" stroke="#fff" strokeWidth="2" /></svg></TopButton>
            <TopButton $w={40} aria-label="終了"><Cross s={12} /></TopButton>
          </TopButtons>
        </WindowArea>
      </TitleBar>

      <MenuBar>
        <MenuGroup>
          <MenuButton aria-label="メニュー">
            <svg width="12" height="10"><path d="M0 1h12M2 4h10M2 6.500h10M0 9h12" stroke="#fff" /></svg><Up />
          </MenuButton>
          {menu.map(([t, w]) => <Slot key={t} href="#" $w={w} $small={isKana(t)}>{t}</Slot>)}
        </MenuGroup>
        <MenuGroup>
          <DropButton $w={91}>
            <Bolt><svg width="13" height="12"><path d="M5 0L0 6h3l-2 6 5-7H3zM11 0L6 6h3l-2 6 5-7H9z" fill="#ffc20e" /></svg></Bolt>
            レート更新<Down />
          </DropButton>
          <DropButton $w={64}>ティッカー<Down /></DropButton>
          <DropButton $w={68}>マイページ<Down /></DropButton>
          <DropButton $w={75}>テンプレート<Down /></DropButton>
          <DropButton $w={75}>編集モード<Down /></DropButton>
          <DropButton $w={99}>表示・環境設定<Down /></DropButton>
        </MenuGroup>
      </MenuBar>

      <ToolRow>
        <ToolGroup>
          <Grip /><Tag $c="#f01c14" $w={36}>情報</Tag><Divider />
          <Items list={infoItems} /><GroupEnd />
        </ToolGroup>
        <ToolGroup>
          <Divider /><Grip /><Divider /><Tag $c="#8a12f0" $w={36}>注文</Tag><Divider />
          <Items list={orderItems} /><GroupEnd />
        </ToolGroup>
        <ToolGroup $end>
          <Divider /><Grip /><Divider /><Tag $c="#ee7410" $w={36}>口座</Tag><Divider />
          <TinyButton $dark aria-label="続き"><More /></TinyButton>
        </ToolGroup>
      </ToolRow>
      <ToolRow>
        <ToolGroup>
          <Grip /><Tag $c="#1478f0" $w={36}>照会</Tag><Divider />
          <TinyButton $dark aria-label="続き"><More /></TinyButton>
        </ToolGroup>
        <ToolGroup>
          <Divider /><Grip /><Divider /><Tag $c="#ee7410" $w={36}>設定</Tag>
          <Items list={setItems} /><GroupEnd />
        </ToolGroup>
      </ToolRow>
      <ToolRow>
        <ToolGroup>
          <Grip /><Tag $c="#58c80c" $w={80}>入出金・振替</Tag><Divider />
          <Items list={cashItems} dim /><GroupEnd />
        </ToolGroup>
      </ToolRow>

      <Workspace>
        <TabStrip>
          {tabs.map((t, i) => (
            <Tab key={t} $active={i === 0}>
              <TabLabel $active={i === 0}>USD/JPY {t}</TabLabel>
              <TinyButton aria-label="タブを閉じる"><Cross s={9} /></TinyButton>
            </Tab>
          ))}
          <Spacer />
          <PaneButton aria-label="最大化"><svg width="15" height="12"><path d="M.5 3V.5H3M12 .5h2.500V3M14.500 9v2.500H12M3 11.500H.5V9" fill="none" stroke="#fff" /><rect x="3" y="3" width="9" height="6" fill="#fff" /></svg></PaneButton>
          <PaneButton aria-label="閉じる"><Cross s={11} /></PaneButton>
        </TabStrip>

        <Pane>
          <ControlRow>
            <Picker $w={152}>
              <Flag kind="us" /><Flag kind="jp" />
              <select aria-label="通貨ペア"><option>ドル/円</option></select><Down s={10} />
            </Picker>
            <Picker $w={82}><select aria-label="足種"><option>日足</option></select><Down s={10} /></Picker>
            <ToolButton $w={93}>テクニカル選択<Down /></ToolButton>
            <ToolButton aria-label="描画"><svg width="14" height="14"><path d="M1 13l2-5 7-7 3 3-7 7z" fill="#3f92e4" /><path d="M3 8l3 3" stroke="#0d2a4a" /></svg></ToolButton>
            <ToolButton aria-label="情報"><svg width="13" height="13"><circle cx="6.500" cy="6.500" r="5.800" fill="#3f92e4" /><path d="M6.500 3v1.500M6.500 6v4.500" stroke="#0c1a2c" strokeWidth="2" /></svg></ToolButton>
            <ToolButton aria-label="エリア"><svg width="17" height="10"><path d="M0 10V6l4-3 2 1 3-3 2 2 2-1 4 4v4z" fill="#fff" /></svg></ToolButton>
            <Pair><PriceSide $on>Bid</PriceSide><PriceSide>Ask</PriceSide></Pair>
            <ToolButton aria-label="自動調整"><svg width="19" height="15"><path d="M1 3V1h17v2M1 12v2h17v-2" fill="none" stroke="#3f92e4" /><path d="M3.500 6v5M6 5v5M8.500 7v4M11 4v6M13.500 5v5M16 3v5" stroke="#3f92e4" /></svg></ToolButton>
            {['M9 6h6', 'M9 6h6M12 3v6'].map((d, k) => (
              <ToolButton key={d} aria-label={k ? '拡大' : '縮小'}>
                <svg width="19" height="16" fill="none" stroke="#ddd">
                  <circle cx="12" cy="6" r="4.800" strokeWidth="1.300" /><path d={d} /><path d="M15.500 9.500l3 4" strokeWidth="2" />
                  <path d={k ? 'M3 3v11M1 5l2-2 2 2M1 12l2 2 2-2' : 'M3 3v4M1 5l2 2 2-2M3 14v-4M1 12l2-2 2 2'} />
                </svg>
              </ToolButton>
            ))}
          </ControlRow>
          <DrawRow>
            {drawTools.map(([name, icon, gap]) => (
              <DrawButton key={name} aria-label={name} $gap={gap}>
                <svg width="20" height="20" viewBox="1 1 20 20" fill="none" stroke="#fff">{icon}</svg>
              </DrawButton>
            ))}
          </DrawRow>

          <ChartBox>
            <Chart />
            <Legend>
              <LegendGrip />
              {legend.map(s => (
                <React.Fragment key={s.title}>
                  <LegendHead>{s.title}<button aria-label="閉じる"><Cross s={7} /></button></LegendHead>
                  {s.rows.length > 0 && (
                    <LegendTable $lit={s.lit}>
                      <tbody>
                        {s.rows.map(([t, v, c]) => (
                          <tr key={t}><th scope="row"><Swatch $c={c} />{t}</th><td>{v}</td></tr>
                        ))}
                      </tbody>
                    </LegendTable>
                  )}
                </React.Fragment>
              ))}
            </Legend>
          </ChartBox>

          <BottomRow>
            <Caption htmlFor="bars" $w={33}>本数:</Caption>
            <Field id="bars" $w={25} defaultValue="100" />
            <SmallButton $w={15} aria-label="減らす"><Down s={8} /></SmallButton>
            <SmallButton $w={15} $gap={6} aria-label="増やす"><Up /></SmallButton>
            <Caption htmlFor="from" $w={23}>本</Caption>
            <Field id="from" $w={78} defaultValue="2017/09/29" />
            <SmallButton $w={20} $gap={9} aria-label="開始日"><CalendarIcon /></SmallButton>
            <Field $w={42} $off disabled defaultValue="00:00" aria-label="開始時刻" />
            <Caption htmlFor="to" $w={28}>　～</Caption>
            <Field id="to" $w={78} defaultValue="2018/01/12" />
            <SmallButton $w={20} $gap={9} aria-label="終了日"><CalendarIcon /></SmallButton>
            <Field $w={42} $off disabled defaultValue="00:00" aria-label="終了時刻" />
            <Caption as="span" $w={9} />
            <SmallButton $w={25} aria-label="更新"><svg width="15" height="13"><path d="M2 2.500h7a4 3.500 0 0 1 0 7H5" fill="none" stroke="#fff" strokeWidth="2.500" /><path d="M6 5.500v7.500L1 9.500z" fill="#fff" /></svg></SmallButton>
            <Note>※一目均衡表は(株)経済変動総研の著作物です。</Note>
          </BottomRow>
        </Pane>
      </Workspace>
      <Footer><TinyButton aria-label="閉じる"><Cross s={8} /></TinyButton></Footer>
    </Shell>
  );
}
